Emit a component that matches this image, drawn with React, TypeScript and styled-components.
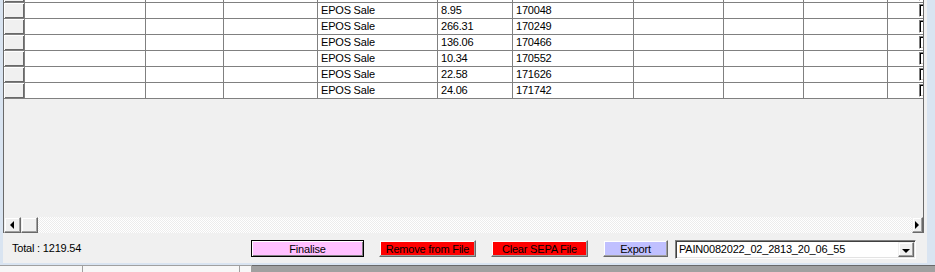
import React from 'react';
import styled, { createGlobalStyle } from 'styled-components';

const GlobalStyle = createGlobalStyle`
  html, body {
    margin: 0;
    padding: 0;
    background: #f0f0f0;
  }
  body {
    font-family: "Liberation Sans", Arial, sans-serif;
    font-size: 11px;
    color: #000;
  }
`;

const FRAME_BLUE = '#d9e4f1';

// widths of the data columns, right grid line included
const columns = [121, 78, 94, 120, 75, 121, 90, 80, 84, 60];

type Payment = { type: string; amount: string; ref: string };

const payments: Payment[] = [
  { type: '', amount: '', ref: '' }, // row scrolled mostly out of view
  { type: 'EPOS Sale', amount: '8.95', ref: '170048' },
  { type: 'EPOS Sale', amount: '266.31', ref: '170249' },
  { type: 'EPOS Sale', amount: '136.06', ref: '170466' },
  { type: 'EPOS Sale', amount: '10.34', ref: '170552' },
  { type: 'EPOS Sale', amount: '22.58', ref: '171626' },
  { type: 'EPOS Sale', amount: '24.06', ref: '171742' },
];

export default function App() {
  return (
    <>
      <GlobalStyle />
      <Window>
        <GridFrame>
          <Viewport>
            <Body>
              {payments.map((p, i) => (
                <Row key={i}>
                  <RowHeader />
                  <Cell />
                  <Cell />
                  <Cell />
                  <Cell>{p.type}</Cell>
                  <Cell>{p.amount}</Cell>
                  <Cell>{p.ref}</Cell>
                  <Cell />
                  <Cell />
                  <Cell />
                  <CheckCell>
                    <Check />
                  </CheckCell>
                </Row>
              ))}
            </Body>
          </Viewport>
          <ScrollBar>
            <ArrowButton>
              <LeftTriangle />
            </ArrowButton>
            <Thumb />
            <Track />
            <RightArrow>
              <RightTriangle />
            </RightArrow>
          </ScrollBar>
        </GridFrame>
        <Footer>
          <Total>Total : 1219.54</Total>
          <Actions>
            <Button $bg="#ffc0ff" $default $width={113}>
              Finalise
            </Button>
            <Button $bg="#ff0000" $width={97}>
              Remove from File
            </Button>
            <Button $bg="#ff0000" $width={97}>
              Clear SEPA File
            </Button>
            <ExportGroup>
              <Button $bg="#c0c0ff" $width={65}>
                Export
              </Button>
              <Combo>
                <ComboText>PAIN0082022_02_2813_20_06_55</ComboText>
                <DropButton>
                  <DownTriangle />
                </DropButton>
              </Combo>
            </ExportGroup>
          </Actions>
        </Footer>
      </Window>
      <Strip>
        <StripCell $width={83} />
        <StripCell $width={157} />
        <StripCell $width={12} />
        <StripDark />
      </Strip>
    </>
  );
}

const Window = styled.div`
  display: flex;
  flex-direction: column;
  border-left: 3px solid ${FRAME_BLUE};
  border-right: 8px solid ${FRAME_BLUE};
  border-bottom: 2px solid ${FRAME_BLUE};
  background: #f0f0f0;
`;

const GridFrame = styled.div`
  display: flex;
  flex-direction: column;
  width: 921px;
  height: 233px;
  box-sizing: border-box;
  border-left: 1px solid #696969;
  border-right: 1px solid #696969;
  overflow: hidden;
`;

const Viewport = styled.div`
  height: 217px;
  overflow: hidden;
  background: #f0f0f0;
`;

const Body = styled.div`
  margin-top: -13px;
`;

const Row = styled.div`
  display: grid;
  grid-template-columns: 21px ${columns.map((w) => `${w}px`).join(' ')};
  height: 16px;
`;

const RowHeader = styled.div`
  box-sizing: border-box;
  border-right: 1px solid #808080;
  border-bottom: 1px solid #808080;
  background: #f0f0f0;
  box-shadow: inset 1px 1px #fff, inset -1px -1px #696969;
`;

const Cell = styled.div`
  box-sizing: border-box;
  border-right: 1px solid #808080;
  border-bottom: 1px solid #808080;
  background: #fff;
  padding: 0 3px;
  line-height: 15px;
  white-space: nowrap;
  overflow: hidden;
  letter-spacing: -0.2px;
`;

const CheckCell = styled(Cell)`
  padding: 1px 0 0 31px;
`;

const Check = styled.div`
  width: 13px;
  height: 13px;
  box-sizing: border-box;
  border: 1px solid;
  border-color: #808080 #fff #fff #808080;
  box-shadow: inset 1px 1px #000, inset -1px -1px #d4d0c8;
  background: #fff;
`;

const ScrollBar = styled.div`
  display: flex;
  height: 16px;
`;

const ArrowButton = styled.div`
  display: flex;
  align-items: center;
  justify-content: center;
  width: 17px;
  flex: none;
  box-sizing: border-box;
  border: 1px solid;
  border-color: #f0f0f0 #696969 #696969 #f0f0f0;
  box-shadow: inset -1px -1px #a0a0a0, inset 1px 1px #fff;
  background: #f0f0f0;
`;

const Thumb = styled(ArrowButton)``;

// the right end of the bar is cut by the form edge
const RightArrow = styled(ArrowButton)`
  width: 11px;
  justify-content: flex-start;
  padding-left: 2px;
`;

const Track = styled.div`
  flex: 1;
  background-color: #fff;
  background-image: repeating-conic-gradient(#ececec 0 25%, #fff 0 50%);
  background-size: 2px 2px;
`;

const LeftTriangle = styled.span`
  width: 0;
  height: 0;
  border-top: 4px solid transparent;
  border-bottom: 4px solid transparent;
  border-right: 4px solid #000;
  margin-left: -2px;
`;

const RightTriangle = styled.span`
  width: 0;
  height: 0;
  border-top: 4px solid transparent;
  border-bottom: 4px solid transparent;
  border-left: 4px solid #000;
`;

const Footer = styled.div`
  display: flex;
  align-items: flex-start;
  justify-content: space-between;
  height: 30px;
  box-sizing: border-box;
  padding: 7px 11px 0 9px;
`;

const Total = styled.div`
  line-height: 16px;
  letter-spacing: -0.2px;
`;

const Actions = styled.div`
  display: flex;
  align-items: flex-start;
  gap: 15px;
`;

const ExportGroup = styled.div`
  display: flex;
  align-items: flex-start;
  gap: 7px;
`;

const Button = styled.button<{ $bg: string; $width: number; $default?: boolean }>`
  width: ${(p) => p.$width}px;
  height: 17px;
  padding: 0;
  margin: 0;
  box-sizing: border-box;
  font-family: "Liberation Sans", Arial, sans-serif;
  font-size: 11px;
  letter-spacing: -0.2px;
  line-height: 14px;
  color: #000;
  background: ${(p) => p.$bg};
  border: 1px solid;
  border-color: ${(p) => (p.$default ? '#000' : '#f0f0f0 #696969 #696969 #f0f0f0')};
  box-shadow: ${(p) =>
    p.$default ? 'inset 1px 1px #fff, inset -1px -1px #808080' : 'inset -1px -1px #a0a0a0, inset 1px 1px #fff'};
`;

const Combo = styled.div`
  display: flex;
  align-items: stretch;
  width: 241px;
  height: 19px;
  box-sizing: border-box;
  border: 1px solid;
  border-color: #808080 #fff #fff #808080;
  box-shadow: inset 1px 1px #404040, inset -1px -1px #e3e3e3;
  background: #fff;
  padding: 1px;
`;

const ComboText = styled.div`
  flex: 1;
  padding-left: 2px;
  line-height: 15px;
  letter-spacing: -0.2px;
  white-space: nowrap;
`;

const DropButton = styled(ArrowButton)`
  width: 16px;
`;

const DownTriangle = styled.span`
  width: 0;
  height: 0;
  border-left: 4px solid transparent;
  border-right: 4px solid transparent;
  border-top: 4px solid #000;
  margin-top: 2px;
`;

const Strip = styled.div`
  display: flex;
  height: 7px;
`;

const StripCell = styled.div<{ $width: number }>`
  width: ${(p) => p.$width}px;
  box-sizing: border-box;
  border-top: 1px solid #a0a0a0;
  border-right: 1px solid #a0a0a0;
  background: #f7f7f7;
`;

const StripDark = styled.div`
  flex: 1;
  border-top: 1px solid #696969;
  background: #a0a0a0;
`;
